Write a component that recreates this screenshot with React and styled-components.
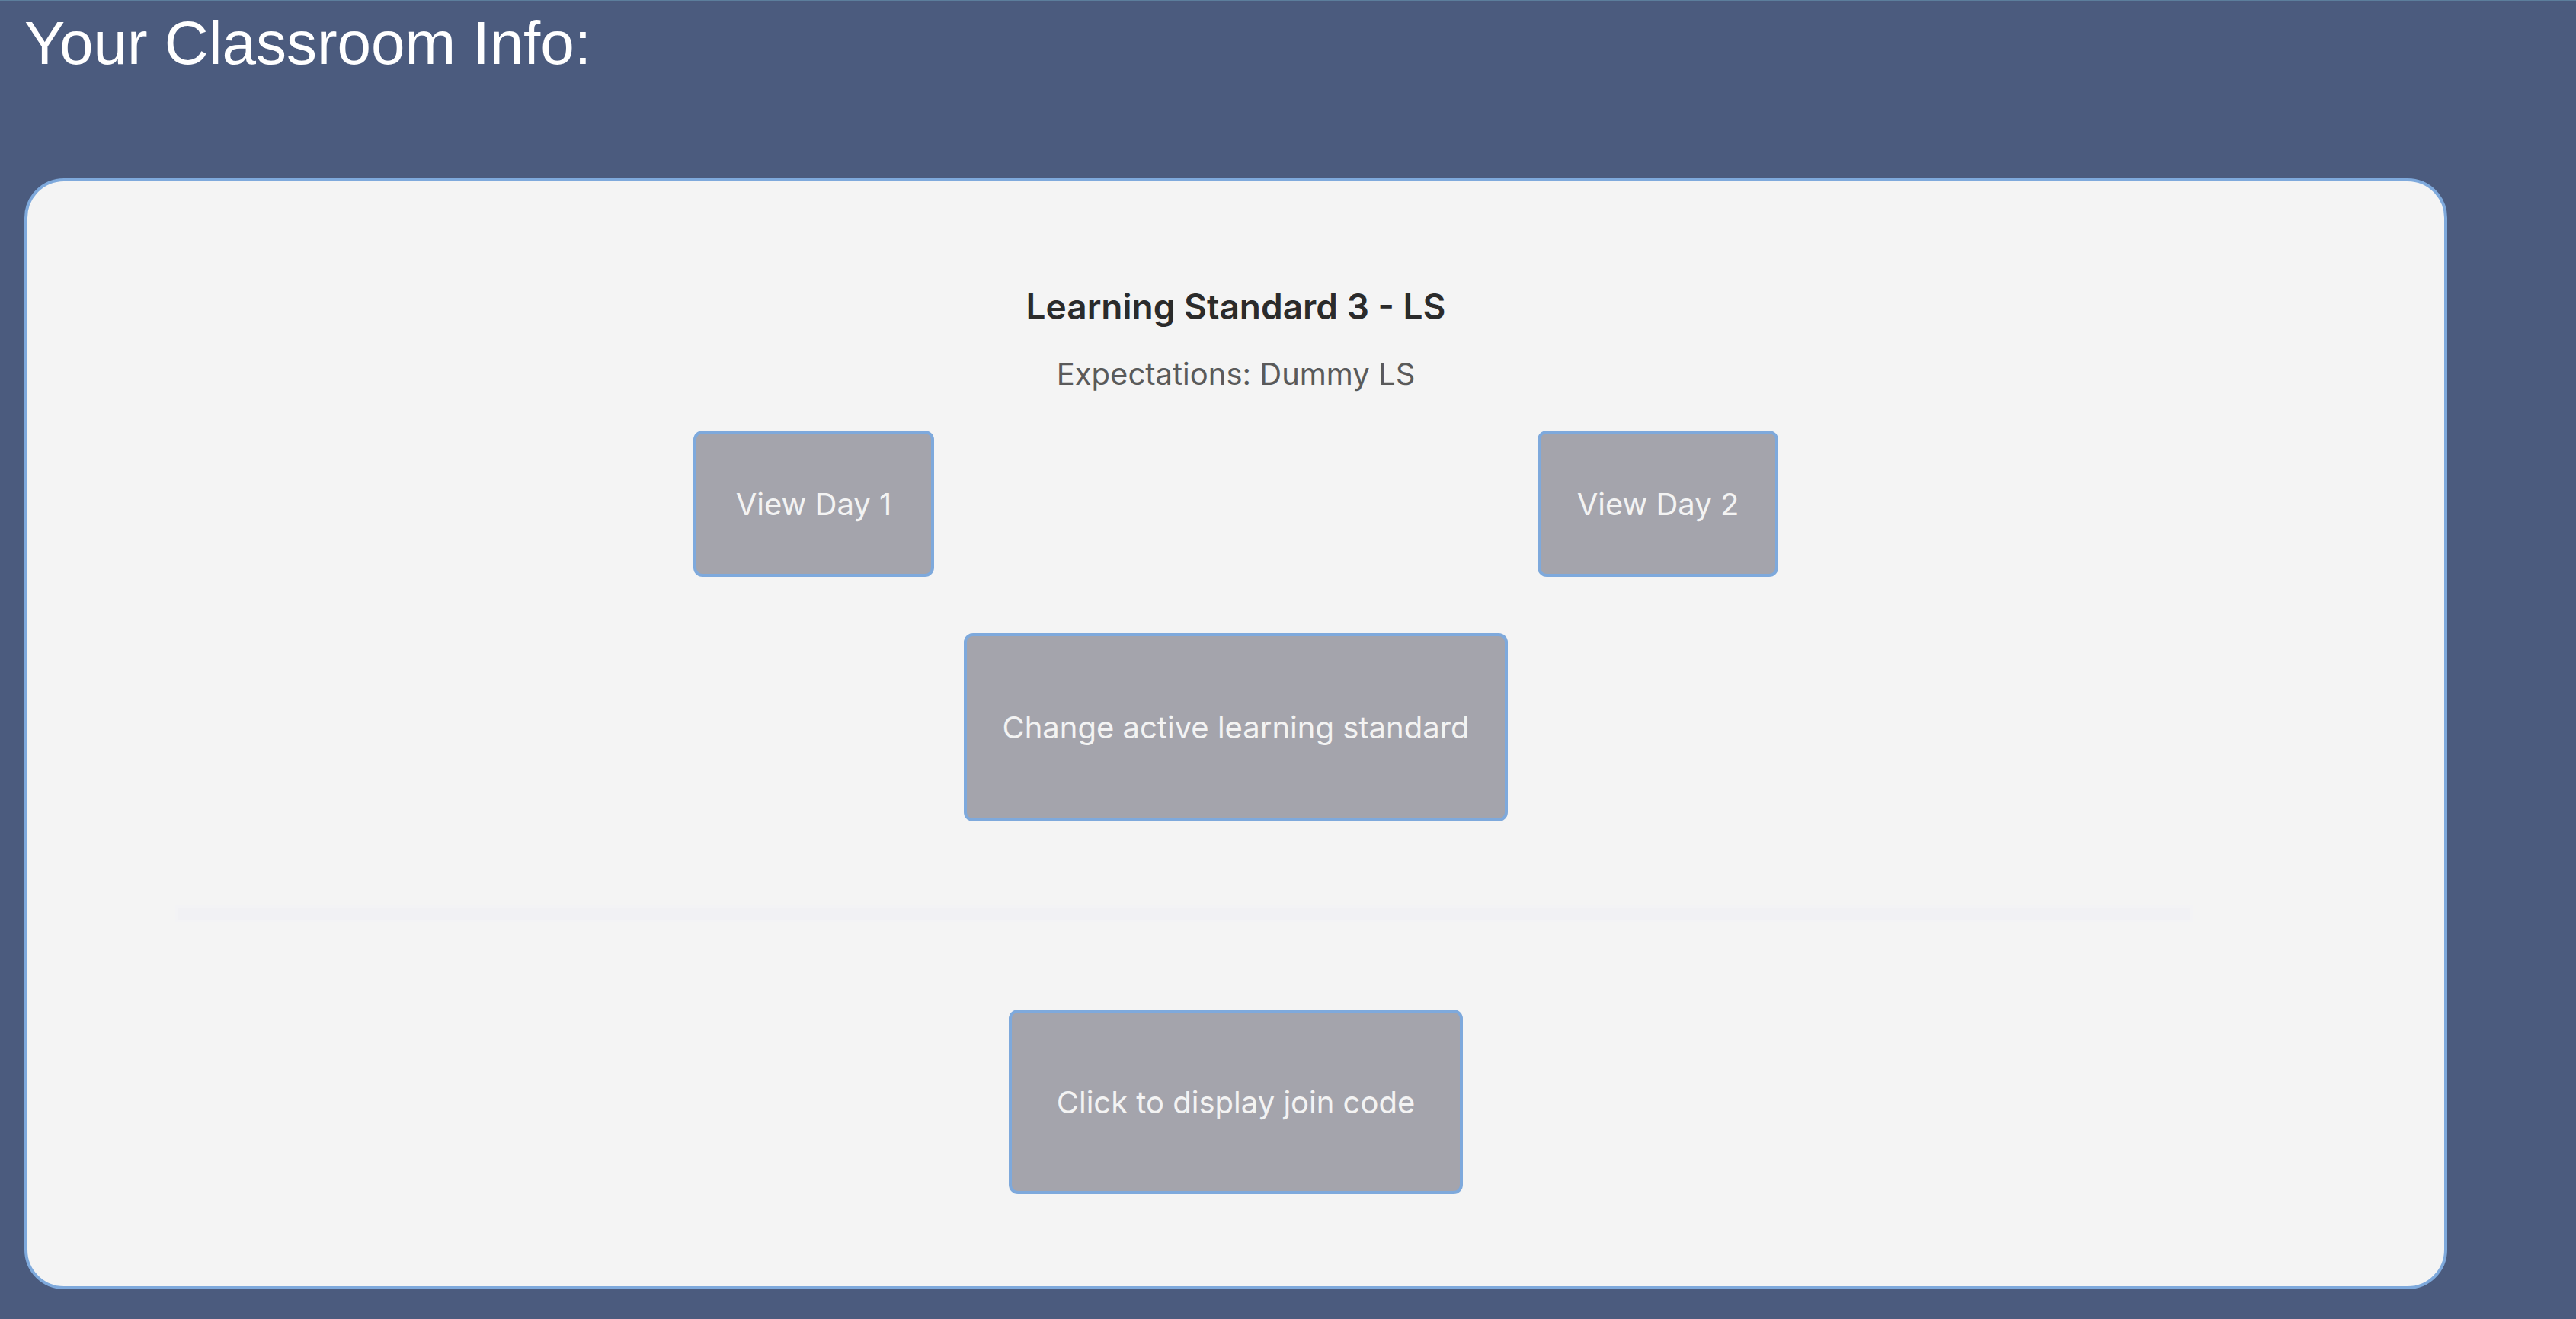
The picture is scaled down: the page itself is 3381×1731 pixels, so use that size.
import styled, { createGlobalStyle } from "styled-components";

const GlobalStyle = createGlobalStyle`
  html, body {
    margin: 0;
    padding: 0;
    background: #4b5b7e;
  }
  * {
    box-sizing: border-box;
  }
`;

const Page = styled.div`
  min-height: 1731px;
  border-top: 1px solid #5c7e9c;
  padding: 0 0 39px 32px;
  display: flex;
  flex-direction: column;
`;

const Title = styled.h1`
  margin: 16px 0 0 0;
  height: 217px;
  font-family: "Liberation Sans", Arial, sans-serif;
  font-weight: 400;
  font-size: 80px;
  line-height: 80px;
  color: #ffffff;
`;

const Card = styled.div`
  width: 3180px;
  height: 1458px;
  background: #f4f4f4;
  border: 4px solid #7ea9dc;
  border-radius: 52px;
  padding-top: 136px;
  display: flex;
  flex-direction: column;
  align-items: center;
  font-family: Inter, "Noto Sans", sans-serif;
`;

const Heading = styled.h3`
  margin: 0;
  font-size: 46px;
  font-weight: 600;
  line-height: 56px;
  color: #2b2b2b;
`;

const Expectations = styled.p`
  margin: 38px 0 0 0;
  font-size: 40px;
  line-height: 46px;
  color: #5a5a5a;
`;

const DayRow = styled.div`
  margin-top: 51px;
  display: flex;
  gap: 792px;
`;

const ActionButton = styled.button`
  width: ${({ w }) => w}px;
  height: ${({ h }) => h}px;
  margin-top: ${({ top }) => top || 0}px;
  display: flex;
  align-items: center;
  justify-content: center;
  background: #a4a4ac;
  border: 4px solid #7ea9dc;
  border-radius: 12px;
  color: #f3f3f3;
  font-family: Inter, "Noto Sans", sans-serif;
  font-size: 40px;
  cursor: pointer;
  padding: 0;
`;

const FaintBand = styled.div`
  align-self: flex-start;
  margin: 110px 0 0 194px;
  width: 2648px;
  height: 22px;
  background: #f1f1f4;
  border: 3px solid #f3f3f5;
`;

export default function App() {
  return (
    <>
      <GlobalStyle />
      <Page>
        <Title>Your Classroom Info:</Title>
        <Card>
          <Heading>Learning Standard 3 - LS</Heading>
          <Expectations>Expectations: Dummy LS</Expectations>
          <DayRow>
            <ActionButton w={316} h={192}>View Day 1</ActionButton>
            <ActionButton w={316} h={192}>View Day 2</ActionButton>
          </DayRow>
          <ActionButton w={714} h={247} top={74}>
            Change active learning standard
          </ActionButton>
          <FaintBand />
          <ActionButton w={596} h={242} top={115}>
            Click to display join code
          </ActionButton>
        </Card>
      </Page>
    </>
  );
}
